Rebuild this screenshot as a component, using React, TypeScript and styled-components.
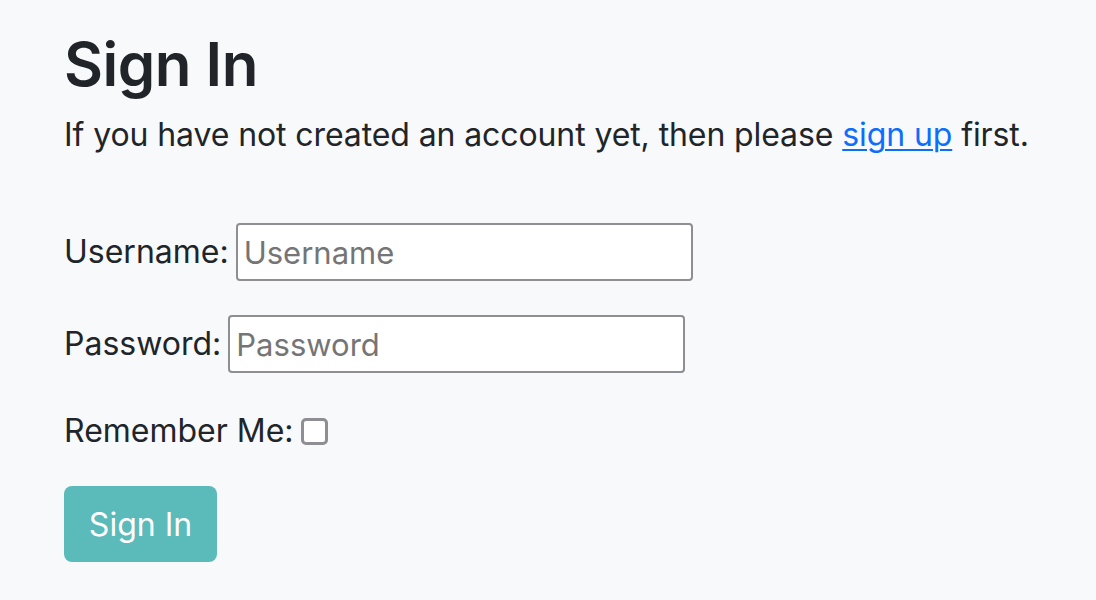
import React from "react";
import styled, { createGlobalStyle } from "styled-components";

const GlobalStyle = createGlobalStyle`
  html, body {
    margin: 0;
    background: #f8f9fa;
  }
  body {
    font-family: Inter, "Noto Sans", sans-serif;
    color: #212529;
  }
`;

const Page = styled.main`
  padding: 28px 0 0 64px;
`;

const Title = styled.h1`
  margin: 0 0 11px 0;
  font-size: 60px;
  font-weight: 600;
  line-height: 1.2;
  letter-spacing: -0.5px;
`;

const Intro = styled.p`
  margin: 0 0 64px 0;
  font-size: 32px;
  line-height: 48px;
  letter-spacing: -0.1px;
  white-space: nowrap;
`;

const Link = styled.a`
  color: #0d6efd;
  text-decoration: underline;
  text-underline-offset: 3px;
  text-decoration-thickness: 2px;
`;

const Form = styled.form`
  display: flex;
  flex-direction: column;
  align-items: flex-start;
  gap: 34px;
`;

const Field = styled.div`
  display: flex;
  align-items: center;
  gap: 7px;
  font-size: 32px;
  line-height: 48px;
`;

const Input = styled.input`
  box-sizing: border-box;
  width: 457px;
  height: 58px;
  padding: 0 6px;
  border: 2px solid #8e8e93;
  border-radius: 4px;
  background: #fff;
  font-family: inherit;
  font-size: 31px;
  color: #212529;
  &::placeholder {
    color: #757575;
  }
`;

const Check = styled.span`
  box-sizing: border-box;
  display: inline-block;
  width: 27px;
  height: 27px;
  border: 3px solid #8e8e93;
  border-radius: 5px;
  background: #fff;
`;

const Button = styled.button`
  box-sizing: border-box;
  width: 153px;
  height: 76px;
  margin-top: -3px;
  border: none;
  border-radius: 8px;
  background: #5bbaba;
  color: #fff;
  font-family: inherit;
  font-size: 32px;
`;

export default function App() {
  return (
    <Page>
      <GlobalStyle />
      <Title>Sign In</Title>
      <Intro>
        If you have not created an account yet, then please{" "}
        <Link href="#">sign up</Link> first.
      </Intro>
      <Form onSubmit={(e) => e.preventDefault()}>
        <Field>
          <span>Username:</span>
          <Input placeholder="Username" />
        </Field>
        <Field>
          <span>Password:</span>
          <Input type="password" placeholder="Password" />
        </Field>
        <Field>
          <span>Remember Me:</span>
          <Check role="checkbox" aria-checked="false" />
        </Field>
        <Button type="submit">Sign In</Button>
      </Form>
    </Page>
  );
}
